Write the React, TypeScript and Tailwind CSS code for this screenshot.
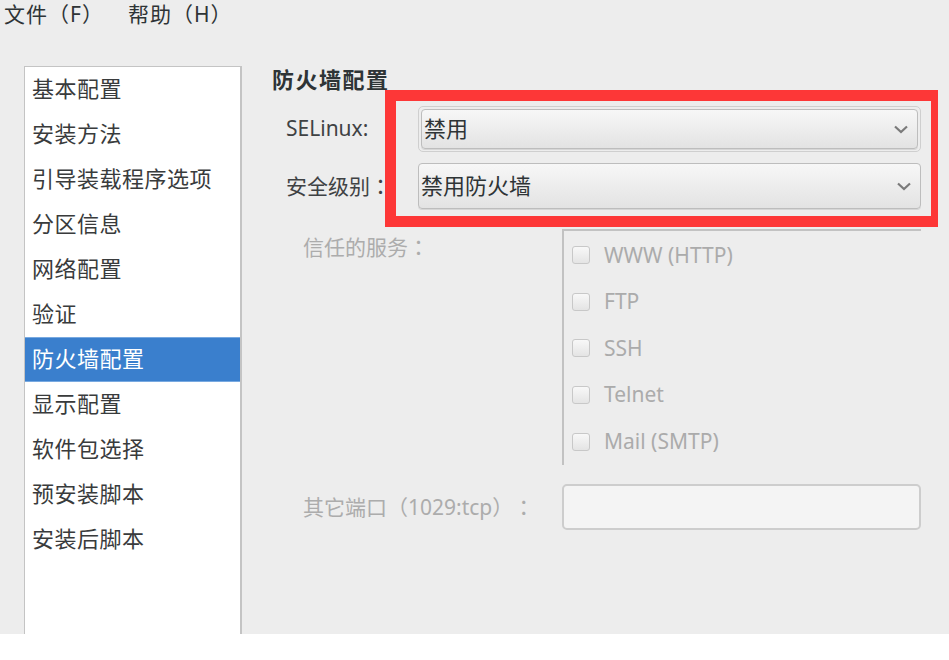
import React from 'react';

const font = { fontFamily: '"Noto Sans", "Noto Sans CJK SC", sans-serif' };

const pages = [
  '基本配置',
  '安装方法',
  '引导装载程序选项',
  '分区信息',
  '网络配置',
  '验证',
  '防火墙配置',
  '显示配置',
  '软件包选择',
  '预安装脚本',
  '安装后脚本',
];

const services = ['WWW (HTTP)', 'FTP', 'SSH', 'Telnet', 'Mail (SMTP)'];

// the GTK labels use a centred full-width colon
const Colon = () => (
  <span style={{ fontFamily: '"Noto Sans CJK JP", sans-serif' }}>：</span>
);

const Chevron = () => (
  <svg width="16" height="11" viewBox="0 0 16 11" className="shrink-0">
    <polyline points="2,2.5 8,8 14,2.5" fill="none" stroke="#7a7a7a" strokeWidth="2.2" />
  </svg>
);

const Combo = ({ value, focused }: { value: string; focused?: boolean }) => {
  const inner = (
    <div className="flex items-center justify-between h-full pl-[2px] pr-[8px] rounded-[4px] border border-[#bdbdbd] bg-gradient-to-b from-[#f7f7f7] to-[#e3e3e3] shadow-[0_1px_0_#d6d6d6] text-[22px] text-[#2e3436]">
      <span className="pb-[2px]">{value}</span>
      <Chevron />
    </div>
  );
  if (focused) {
    return (
      <div className="h-[46px] rounded-[5px] border border-[#cfcfcf] p-[2px]">{inner}</div>
    );
  }
  return <div className="h-[46px]">{inner}</div>;
};

const App = () => {
  return (
    <div className="relative w-full h-[660px] bg-white [text-spacing-trim:space-all]" style={font}>
      <div className="h-[634px] bg-[#ededed] overflow-hidden">
        {/* menu bar */}
        <div className="flex items-center h-[30px] pl-[4px] text-[21px] tracking-[1px] text-[#2e3436]">
          <span className="w-[124px]">文件（F）</span>
          <span>帮助（H）</span>
        </div>

        <div className="flex items-start mt-[36px]">
          {/* page list */}
          <div className="ml-[24px] w-[218px] h-[600px] shrink-0 bg-white border border-[#c4c4c4] border-r-2">
            {pages.map((p) => (
              <div
                key={p}
                className={
                  p === '防火墙配置'
                    ? 'h-[45px] flex items-center pl-[7px] pb-[3px] text-[22px] tracking-[0.5px] text-white bg-[#3a7fcd] border-y border-[#78a9e0]'
                    : 'h-[45px] flex items-center pl-[7px] pb-[3px] text-[22px] tracking-[0.5px] text-[#393b3c]'
                }
              >
                {p}
              </div>
            ))}
          </div>

          {/* firewall panel */}
          <div className="ml-[30px] w-[649px]">
            <div className="h-[28px] flex items-center pb-[2px] text-[22px] font-bold tracking-[1.5px] text-[#2e3436]">防火墙配置</div>

            <div className="mt-[12px] grid grid-cols-[132px_1fr] gap-y-[11px] items-center pl-[14px]">
              <span className="text-[21px] text-[#3f4244]">SELinux:</span>
              <Combo value="禁用" focused />
              <span className="text-[21px] text-[#3f4244]">安全级别<Colon /></span>
              <Combo value="禁用防火墙" />
            </div>

            <div className="mt-[20px] flex pl-[31px]">
              <div className="w-[259px] pt-[2px] text-[21px] text-[#acacac]">信任的服务<Colon /></div>
              <div className="flex-1 border-l-2 border-t-2 border-[#c2c2c2] pt-[1px]">
                {services.map((s) => (
                  <div key={s} className="h-[46.6px] flex items-center pl-[8px]">
                    <span className="w-[18px] h-[18px] rounded-[3px] border border-[#c8c8c8] bg-gradient-to-b from-[#f8f8f8] to-[#e4e4e4]" />
                    <span className="ml-[14px] text-[21px] text-[#ababab]">{s}</span>
                  </div>
                ))}
              </div>
            </div>

            <div className="mt-[19px] flex items-center pl-[31px]">
              <div className="w-[259px] text-[21px] text-[#acacac]">其它端口（1029:tcp）<Colon /></div>
              <div className="flex-1 h-[46px] rounded-[5px] border-2 border-[#cdcdcd] bg-[#f4f4f4]" />
            </div>
          </div>
        </div>
      </div>

      {/* red annotation frame */}
      <div className="absolute left-[385px] top-[90px] w-[553px] h-[137px] border-[#fd3737] border-t-[11px] border-l-[11px] border-b-[11px] border-r-[7px]" />
    </div>
  );
};

export default App;
